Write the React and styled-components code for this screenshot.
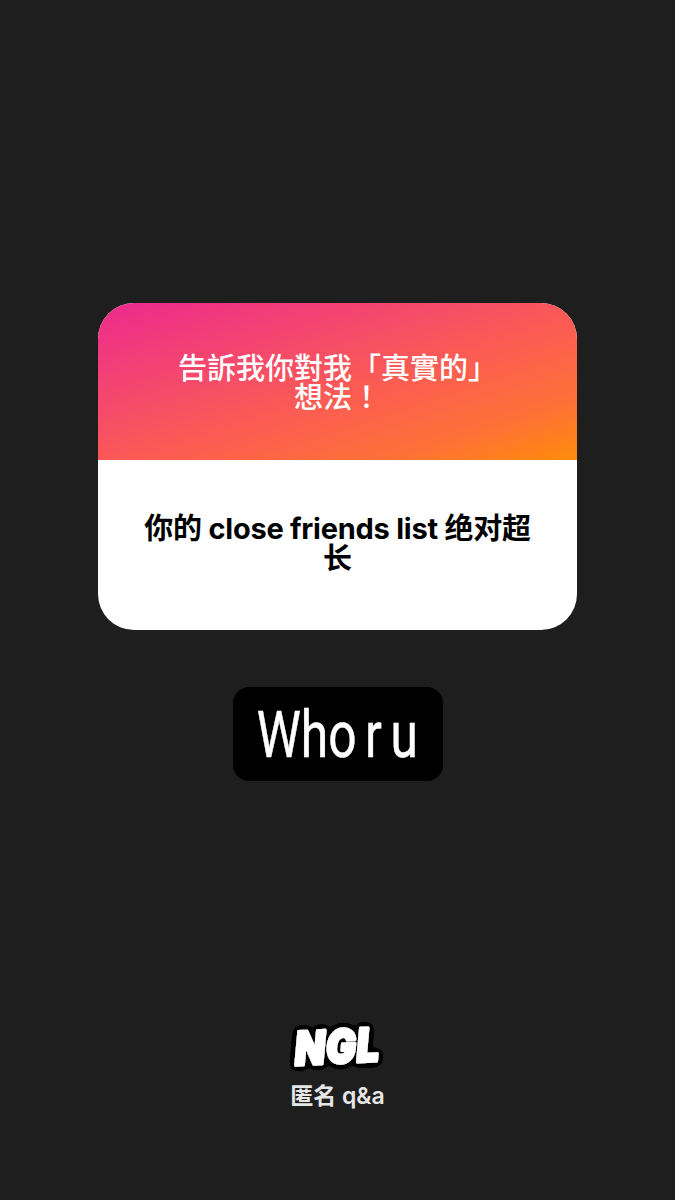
import React from "react";
import styled, { createGlobalStyle } from "styled-components";

const cjk = '"Inter", "Noto Sans CJK SC", sans-serif';

const GlobalStyle = createGlobalStyle`
  html, body {
    margin: 0;
    padding: 0;
    background: #1e1e1e;
  }
`;

const Page = styled.div`
  width: 675px;
  height: 1200px;
  padding-top: 303px;
  box-sizing: border-box;
  display: flex;
  flex-direction: column;
  align-items: center;
  background: #1e1e1e;
  overflow: hidden;
`;

const Card = styled.div`
  width: 479px;
  height: 327px;
  border-radius: 36px;
  overflow: hidden;
  background: #fff;
  display: flex;
  flex-direction: column;
`;

const CardHeader = styled.div`
  height: 157px;
  box-sizing: border-box;
  padding: 49px 72px 0;
  background: linear-gradient(162deg, #ec2a8e 0%, #f4466f 30%, #fb5c53 55%, #fe7038 80%, #ff8c0a 100%);
  color: #fff;
  font: 500 29px/29px "Noto Sans CJK TC", sans-serif;
  text-align: center;
`;

const CardBody = styled.div`
  flex: 1;
  padding: 54px 40px 0;
  color: #000;
  font: 700 29px/30px ${cjk};
  letter-spacing: -0.25px;
  text-align: center;
`;

const NameTag = styled.div`
  width: 210px;
  height: 94px;
  margin-top: 57px;
  padding-top: 2px;
  box-sizing: border-box;
  border-radius: 16px;
  background: #000;
  display: flex;
  align-items: center;
  justify-content: center;
`;

const NameText = styled.span`
  color: #fff;
  font: 400 65px/1 "Roboto", sans-serif;
  -webkit-text-stroke: 0.5px #fff;
  word-spacing: -5px;
  white-space: pre;
  transform: scaleX(0.765);
`;

const Footer = styled.div`
  margin-top: 230px;
  display: flex;
  flex-direction: column;
  align-items: center;
  gap: 8px;
`;

const LogoText = styled.text`
  fill: #fff;
  stroke: #fff;
  stroke-width: 3px;
  stroke-linejoin: round;
  font: italic 900 46px "Inter", sans-serif;
  letter-spacing: 1px;
`;

const Caption = styled.div`
  color: #e6e6e6;
  font: 600 23px/26px ${cjk};
`;

function NglLogo() {
  return (
    <svg width="140" height="64" viewBox="0 0 140 64">
      <defs>
        <filter id="ngl-outline" x="-10%" y="-20%" width="120%" height="140%">
          <feGaussianBlur in="SourceAlpha" stdDeviation="3" />
          <feComponentTransfer result="halo">
            <feFuncA type="linear" slope="40" intercept="-2" />
          </feComponentTransfer>
          <feFlood floodColor="#000" />
          <feComposite in2="halo" operator="in" result="edge" />
          <feMerge>
            <feMergeNode in="edge" />
            <feMergeNode in="SourceGraphic" />
          </feMerge>
        </filter>
      </defs>
      <g filter="url(#ngl-outline)">
        <LogoText
          x="0"
          y="0"
          textAnchor="middle"
          transform="translate(70 52) rotate(-3) scale(0.86 1)"
        >
          NGL
        </LogoText>
      </g>
    </svg>
  );
}

export default function App() {
  return (
    <Page>
      <GlobalStyle />
      <Card>
        <CardHeader>告訴我你對我「真實的」想法！</CardHeader>
        <CardBody>你的 close friends list 绝对超长</CardBody>
      </Card>
      <NameTag>
        <NameText>Who r u</NameText>
      </NameTag>
      <Footer>
        <NglLogo />
        <Caption>匿名 q&amp;a</Caption>
      </Footer>
    </Page>
  );
}
